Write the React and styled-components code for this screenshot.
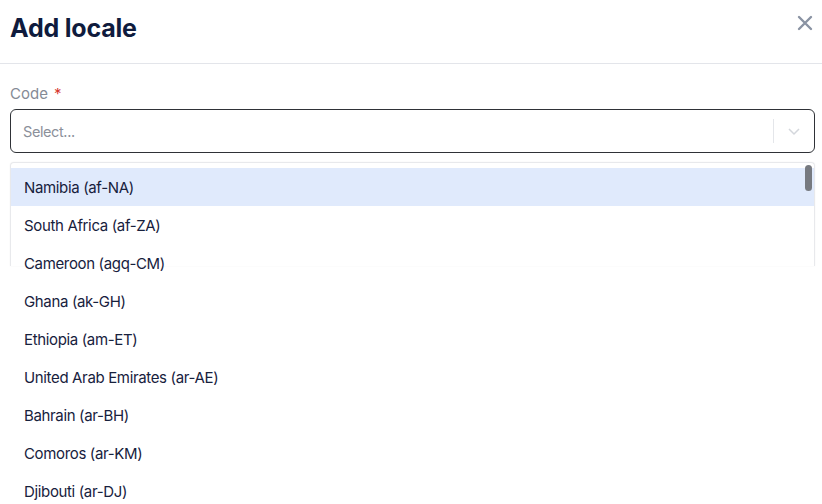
import React from "react";
import styled, { createGlobalStyle } from "styled-components";

const GlobalStyle = createGlobalStyle`
  html, body {
    margin: 0;
    padding: 0;
    background: #ffffff;
    font-family: Inter, "Noto Sans", sans-serif;
    overflow: hidden;
  }
`;

const locales = [
  "Namibia (af-NA)",
  "South Africa (af-ZA)",
  "Cameroon (agq-CM)",
  "Ghana (ak-GH)",
  "Ethiopia (am-ET)",
  "United Arab Emirates (ar-AE)",
  "Bahrain (ar-BH)",
  "Comoros (ar-KM)",
  "Djibouti (ar-DJ)",
];

function App() {
  return (
    <>
      <GlobalStyle />
      <Modal>
        <Header>
          <Title>Add locale</Title>
          <CloseBtn aria-label="Close">
            <svg width="16" height="16" viewBox="0 0 16 16">
              <path d="M2 2 L14 14 M14 2 L2 14" stroke="#8a93a3" strokeWidth="2.4" strokeLinecap="round" />
            </svg>
          </CloseBtn>
        </Header>
        <Body>
          <Label>
            Code <Required>*</Required>
          </Label>
          <Field>
            <SelectBox>
              <Placeholder>Select...</Placeholder>
              <Indicators>
                <Separator />
                <svg width="16" height="16" viewBox="0 0 16 16">
                  <path d="M3 6 L8 11 L13 6" fill="none" stroke="#d4d7dc" strokeWidth="1.5" />
                </svg>
              </Indicators>
            </SelectBox>
            <Menu>
              <Thumb />
              {locales.map((l, i) => (
                <Option key={l} active={i === 0}>{l}</Option>
              ))}
            </Menu>
          </Field>
        </Body>
      </Modal>
    </>
  );
}

export default App;

const Modal = styled.div`
  width: 822px;
  height: 504px;
  background: #fff;
`;

const Header = styled.div`
  height: 64px;
  border-bottom: 1px solid #e3e5ea;
  display: flex;
  justify-content: space-between;
  align-items: flex-start;
  padding: 0 10px;
  box-sizing: border-box;
`;

const Title = styled.h1`
  margin: 13px 0 0;
  font-size: 25px;
  font-weight: 700;
  color: #0f1b3d;
  letter-spacing: -0.2px;
`;

const CloseBtn = styled.button`
  margin-top: 15px;
  margin-right: -1px;
  padding: 0;
  border: none;
  background: none;
  display: flex;
`;

const Body = styled.div`
  padding: 21px 7px 0 10px;
`;

const Label = styled.div`
  font-size: 15px;
  color: #858b96;
  line-height: 18px;
  margin-bottom: 6px;
`;

const Required = styled.span`
  color: #d6372e;
  margin-left: 2px;
`;

const Field = styled.div`
  position: relative;
`;

const SelectBox = styled.div`
  height: 44px;
  border: 1.5px solid #2f3237;
  border-radius: 6px;
  box-sizing: border-box;
  display: flex;
  align-items: center;
  justify-content: space-between;
  padding: 0 12px;
`;

const Placeholder = styled.span`
  font-size: 14.5px;
  letter-spacing: -0.4px;
  color: #8b909a;
`;

const Indicators = styled.div`
  display: flex;
  align-items: center;
  gap: 12px;
`;

const Separator = styled.div`
  width: 1px;
  height: 24px;
  background: #e4e6ea;
`;

const Menu = styled.div`
  position: absolute;
  top: 53px;
  left: 0;
  right: 0;
  height: 104px;
  padding-top: 5px;
  box-sizing: border-box;
  border: 1px solid #e8e9ec;
  border-bottom: none;
  border-radius: 4px 4px 0 0;
  box-shadow: 0 0 2px rgba(0, 0, 0, 0.06);
  background: #fff;
`;

const Thumb = styled.div`
  position: absolute;
  top: 2px;
  right: 2px;
  width: 7px;
  height: 26px;
  border-radius: 4px;
  background: #777a80;
  z-index: 1;
`;

const Option = styled.div`
  height: 38px;
  display: flex;
  align-items: center;
  padding-left: 13px;
  font-size: 15px;
  letter-spacing: -0.35px;
  color: #17213d;
  background: ${(p) => (p.active ? "#e0eafc" : "transparent")};
`;
